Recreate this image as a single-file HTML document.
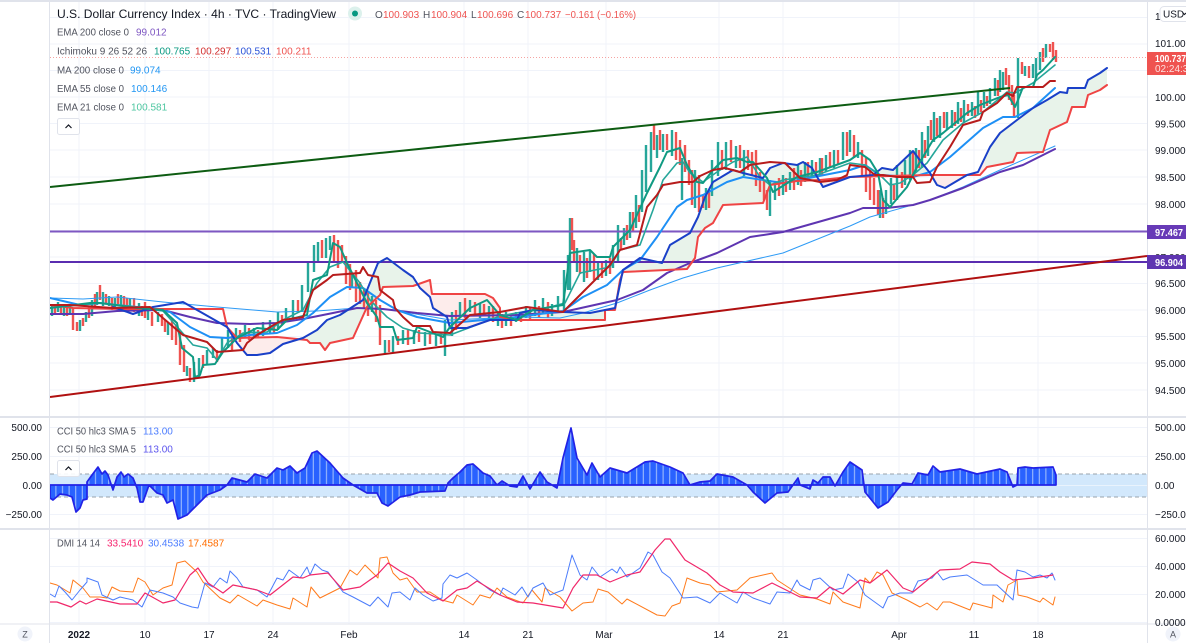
<!DOCTYPE html>
<html><head><meta charset="utf-8"><title>U.S. Dollar Currency Index</title>
<style>
html,body{margin:0;padding:0;background:#fff;width:1186px;height:643px;overflow:hidden}
svg{display:block;font-family:"Liberation Sans",sans-serif;filter:blur(.3px)}
.a{font-size:10px;fill:#131722}
.l{font-size:10px;fill:#50535e}
.v{font-size:10px}
.w{fill:none;stroke-linejoin:round;stroke-linecap:round}
</style></head><body>
<svg width="1186" height="643" viewBox="0 0 1186 643" xmlns="http://www.w3.org/2000/svg">
<defs>
<clipPath id="m"><rect x="50" y="2" width="1097" height="415"/></clipPath>
<clipPath id="cg"><rect x="307" y="0" width="108" height="417"/><rect x="517" y="0" width="300" height="417"/><rect x="880" y="0" width="50" height="417"/><rect x="985" y="0" width="125" height="417"/></clipPath>
<clipPath id="cr"><rect x="227" y="0" width="80" height="417"/><rect x="415" y="0" width="102" height="417"/><rect x="817" y="0" width="63" height="417"/><rect x="930" y="0" width="55" height="417"/></clipPath>
<pattern id="h" x="50" y="0" width="6.6" height="10" patternUnits="userSpaceOnUse"><rect width="6.6" height="10" fill="#2962ff"/><rect x="5.4" width="1" height="10" fill="#a9c4fb"/></pattern>
<path id="cl" d="M113 307L133 314 153 307 183 302 227 327 237 343 247 355 257 355 270 353 283 344 303 338 317 330 327 320 340 315 363 300 378 263 387 258 403 270 413 277 420 288 430 297 433 308 447 317 450 328 467 328 490 320 517 320 520 313 533 310 563 312 590 313 615 308 623 270 640 258 662 263 670 245 690 233 698 217 705 197 713 182 733 170 743 173 763 178 770 168 783 163 797 165 803 162 812 168 823 187 850 177 873 175 882 168 893 170 913 151 922 163 930 173 937 185 945 188 967 175 978 172 990 147 1000 133 1017 120 1033 108 1047 100 1060 92 1067 93 1068 88 1085 88 1088 80 1100 73 1107 68L1107 85 1100 90 1088 95 1085 107 1072 107 1067 122 1050 130 1043 152 1017 153 1013 162 987 167 980 175 930 175 850 177 820 180 797 181 770 185 763 203 723 205 713 223 705 228 698 237 695 258 687 269 623 272 620 280 615 310 605 310 605 320 547 320 516 320 500 317 500 308 493 298 485 294 450 294 432 294 430 280 413 286 383 287 380 295 367 307 353 338 330 343 325 350 320 343 310 343 307 340 277 337 237 338 227 327 223 309 123 309Z"/>
</defs>
<rect width="1186" height="643" fill="#fff"/>

<!-- grid -->
<path d="M79 2V624M145 2V624M209 2V624M273 2V624M349 2V624M464 2V624M528 2V624M606 2V624M719 2V624M783 2V624M899 2V624M974 2V624M1038 2V624" stroke="#f0f3fa" fill="none"/>
<path d="M50 17.5H1147M50 44H1147M50 70.500H1147M50 97H1147M50 123.500H1147M50 150H1147M50 177H1147M50 204H1147M50 230.500H1147M50 257H1147M50 283.500H1147M50 310H1147M50 336.500H1147M50 363H1147M50 390H1147M50 427.500H1147M50 456.500H1147M50 514.500H1147M50 538.500H1147M50 566.500H1147M50 594.500H1147M50 622.500H1147" stroke="#f0f3fa" fill="none"/>

<g clip-path="url(#m)">
<use href="#cl" clip-path="url(#cg)" fill="#e8f3ea"/>
<use href="#cl" clip-path="url(#cr)" fill="#fdeceb"/>
<!-- candles -->
<path d="M52 305V316M58 302V312M64 306V316M70 305V314M80 320V331M86 312V322M92 300V316M97 292V305M103 292V306M109 296V306M115 298V308M121 295V305M130 298V308M139 303V316M148 310V320M158 312V322M168 322V335M187 366V376M194 362V382M199 358V378M207 350V365M213 348V358M222 338V352M228 330V348M236 328V340M245 325V338M254 328V338M263 322V336M270 320V334M278 312V330M286 308V322M293 300V318M302 285V312M308 262V292M314 245V272M318 242V262M326 238V258M330 236V250M352 274V288M372 296V312M385 340V354M393 336V352M403 330V344M414 330V344M425 332V346M436 334V346M445 320V356M452 312V336M460 302V318M470 300V312M480 304V318M489 306V320M498 312V326M506 312V326M516 312V322M526 306V318M535 300V316M543 298V314M552 304V316M558 296V312M564 270V310M568 255V290M570 218V290M577 248V272M584 252V282M590 250V272M598 262V280M606 260V276M613 245V268M618 225V262M624 228V245M630 212V238M636 195V228M642 170V212M646 145V192M651 132V172M657 135V158M663 134V152M672 130V156M682 158V200M695 170V208M706 188V210M712 160V196M718 142V176M726 142V170M736 146V168M744 150V176M770 180V216M775 185V200M783 175V195M790 172V190M798 165V185M805 162V182M812 160V178M820 158V175M826 155V172M834 150V168M843 132V160M850 130V152M858 142V158M880 190V218M886 190V214M891 178V204M897 165V200M905 160V185M910 150V180M916 148V172M922 132V168M928 126V156M934 112V142M940 116V138M947 112V130M952 110V128M958 102V124M964 100V122M972 102V116M978 92V114M984 92V108M990 88V104M995 78V96M1000 70V92M1003 72V90M1018 58V118M1025 66V76M1033 64V78M1036 58V78M1040 52V70M1046 44V58" stroke="#26a69a" stroke-width="2.4" fill="none"/>
<path d="M55 304V314M61 305V315M67 304V316M73 308V330M77 322V331M83 318V326M89 306V318M95 294V306M100 285V300M106 294V304M112 298V310M118 294V304M124 296V308M127 298V312M134 298V312M142 306V316M145 302V318M152 312V326M162 314V326M165 320V332M172 318V340M176 325V345M180 332V365M184 345V372M190 368V382M203 355V368M217 350V362M232 336V350M240 330V342M249 328V340M258 330V338M274 325V334M282 315V325M298 300V312M322 240V258M334 235V262M338 240V268M342 245V262M346 256V284M350 264V290M356 270V302M360 282V304M364 288V308M368 292V316M376 300V322M380 305V345M389 340V352M398 336V345M408 330V345M419 330V342M430 332V344M441 332V344M456 310V330M465 298V318M475 302V316M484 304V316M493 306V322M502 314V328M511 314V326M521 312V322M530 308V320M539 306V318M548 302V318M572 218V250M574 240V262M580 255V274M587 258V278M594 254V280M602 262V278M610 258V274M621 238V250M627 225V240M633 212V232M639 205V222M654 125V150M660 130V150M667 134V150M676 132V160M680 140V165M685 145V172M689 160V185M692 170V205M699 175V212M703 195V208M709 190V208M722 150V170M731 140V162M740 145V168M748 150V170M752 152V176M756 150V186M760 172V192M764 180V200M767 190V210M779 178V196M786 178V192M794 168V190M801 170V186M808 162V178M816 162V175M822 158V176M830 152V168M838 150V165M847 132V156M854 135V158M862 150V175M866 158V192M870 170V200M874 178V205M878 190V215M883 198V218M894 185V200M902 172V188M913 152V176M919 150V168M925 140V158M931 120V140M937 118V136M944 112V128M955 112V126M961 108V122M968 104V116M975 106V118M981 100V112M987 96V106M998 80V96M1006 68V85M1009 75V100M1012 85V105M1014 95V118M1022 62V74M1029 66V78M1043 48V62M1050 44V52M1053 42V60M1056 50V62" stroke="#ef5350" stroke-width="2.4" fill="none"/>

<!-- horizontals -->
<path d="M50 57.500H1147" stroke="#f5a3a1" stroke-width="1" stroke-dasharray="1 2" fill="none"/>
<path d="M50 231.500H1147" stroke="#7e57c2" stroke-width="2" fill="none"/>
<path d="M50 262H1147" stroke="#5a2db0" stroke-width="2" fill="none"/>

<!-- MA 200 -->
<path class="w" stroke="#2e9bf5" stroke-width="1" d="M50 298L83 299 117 297 163 302 217 307 277 312 317 311 357 308 393 310 450 320 517 317 560 318 583 313 617 303 650 290 683 278 717 268 783 253 850 226 870 217 930 200 963 187 1000 170 1055 146"/>
<!-- EMA 200 -->
<path class="w" stroke="#5e35b1" stroke-width="2" d="M50 314L83 314 117 311 163 310 190 317 217 323 250 324 277 323 303 319 333 313 357 308 383 309 417 313 450 316 517 315 563 312 617 300 643 290 667 273 690 263 717 253 750 237 783 232 850 213 863 208 887 208 913 205 930 200 963 188 1000 172 1023 165 1055 149"/>
<!-- EMA 55 -->
<path class="w" stroke="#1e90f5" stroke-width="2" d="M50 298L80 305 100 303 117 305 147 308 170 312 190 327 210 337 227 338 250 335 277 333 297 325 313 313 330 297 347 287 363 288 380 300 397 310 417 317 450 323 517 317 563 311 583 297 607 285 623 270 640 260 657 237 677 207 687 200 703 195 727 182 743 177 783 183 850 170 865 165 880 175 913 177 930 172 950 157 983 128 1003 117 1015 117 1033 108 1055 88"/>
<!-- EMA 21 -->
<path class="w" stroke="#26a69a" stroke-width="1.6" d="M50 308L100 303 137 307 163 311 180 330 193 345 207 348 217 360 227 343 243 333 267 332 283 320 303 310 317 283 330 267 343 262 360 283 370 300 387 317 403 328 420 333 450 335 500 316 550 307 565 303 580 273 610 267 620 250 640 245 653 210 663 180 677 163 683 162 690 173 703 182 717 172 733 162 747 157 760 177 770 185 783 180 817 175 850 163 865 165 880 175 890 185 900 183 913 175 927 163 943 140 963 123 983 112 1007 92 1015 93 1033 83 1055 65"/>
<!-- Lead B -->
<path class="w" stroke="#ef4444" stroke-width="2" d="M50 305L73 308 123 309 223 309 227 327 237 338 277 337 307 340 310 343 320 343 325 350 330 343 353 338 367 307 380 295 383 287 413 286 430 280 432 294 450 294 485 294 493 298 500 308 500 317 516 320 547 320 605 320 605 310 615 310 620 280 623 272 687 269 695 258 698 237 705 228 713 223 723 205 763 203 770 185 797 181 820 180 850 177 930 175 980 175 987 167 1013 162 1017 153 1043 152 1050 130 1067 122 1072 107 1085 107 1088 95 1100 90 1107 85"/>
<!-- Lead A -->
<path class="w" stroke="#1a40c8" stroke-width="2" d="M113 307L133 314 153 307 183 302 227 327 237 343 247 355 257 355 270 353 283 344 303 338 317 330 327 320 340 315 363 300 378 263 387 258 403 270 413 277 420 288 430 297 433 308 447 317 450 328 467 328 490 320 517 320 520 313 533 310 563 312 590 313 615 308 623 270 640 258 662 263 670 245 690 233 698 217 705 197 713 182 733 170 743 173 763 178 770 168 783 163 797 165 803 162 812 168 823 187 850 177 873 175 882 168 893 170 913 151 922 163 930 173 937 185 945 188 967 175 978 172 990 147 1000 133 1017 120 1033 108 1047 100 1060 92 1067 93 1068 88 1085 88 1088 80 1100 73 1107 68"/>
<!-- Conversion -->
<path class="w" stroke="#0f9a82" stroke-width="2" d="M50 308L90 303 100 303 137 308 163 310 177 323 182 348 193 357 195 377 200 375 203 365 215 364 223 352 237 338 257 328 277 330 287 320 307 315 313 280 327 275 333 243 340 247 347 263 357 283 367 303 377 317 380 327 393 327 397 340 413 338 417 327 443 337 450 327 470 308 487 300 500 315 517 320 533 310 563 305 570 253 590 250 597 257 610 257 613 247 630 230 647 193 660 167 667 152 680 148 687 165 697 182 703 183 713 170 723 160 737 158 747 162 753 162 760 170 767 178 773 192 797 177 817 172 850 160 860 153 870 160 878 173 883 200 890 207 907 187 917 167 933 140 943 133 967 113 980 105 1000 97 1008 95 1015 107 1018 100 1023 87 1033 87 1037 75 1043 70 1055 57"/>
<!-- Base -->
<path class="w" stroke="#b71c1c" stroke-width="2" d="M50 305L70 305 113 308 150 307 177 330 183 335 207 342 217 352 243 350 247 343 257 335 277 323 283 320 303 317 313 290 327 280 333 275 360 273 363 267 368 275 378 277 380 290 393 300 395 308 403 317 413 326 430 326 433 332 450 333 470 315 500 312 527 307 563 312 610 265 620 250 637 245 647 207 657 195 663 185 680 182 693 182 700 176 713 170 725 168 740 172 750 165 770 162 785 163 800 178 820 182 837 180 847 175 850 165 865 167 875 175 883 175 897 177 913 177 917 183 930 182 937 167 950 147 963 125 980 120 983 112 997 103 1007 93 1013 96 1017 87 1043 87 1050 81 1055 81"/>
<!-- Trendlines -->
<path d="M50 187L1010 88" stroke="#0d5c12" stroke-width="2" fill="none"/>
<path d="M50 397L1147 256" stroke="#b01010" stroke-width="2" fill="none"/>
</g>

<!-- CCI -->
<rect x="50" y="474" width="1097" height="23" fill="#d2e8fc"/>
<path d="M50 485.500H1147" stroke="#e9f3fd" fill="none"/>
<path d="M50 474H1147M50 497H1147" stroke="#9aa3ad" stroke-dasharray="4 3" fill="none"/>
<path fill="url(#h)" stroke="#2222e6" stroke-width="1.700" stroke-linejoin="round" d="M50 485L50 498 53 500 60 494 67 495 72 497 76 512 80 508 83 500 87 499 87 482 92 475 98 467 102 474 105 471 108 475 113 490 117 477 121 472 124 477 128 474 133 478 137 488 140 502 143 502 149 485 157 493 163 495 167 503 173 500 178 519 187 515 197 505 207 495 220 490 227 485 232 478 247 482 255 474 267 478 277 468 283 470 290 466 297 473 305 468 312 453 317 451 330 463 343 478 353 485 367 493 377 493 382 503 388 506 400 497 410 495 420 492 445 491 448 483 453 478 460 472 467 465 473 464 483 473 490 476 497 485 502 481 510 486 517 487 523 476 530 489 540 472 547 482 557 488 563 458 571 428 577 458 587 475 592 463 600 477 610 468 627 473 645 462 653 461 670 467 683 473 690 485 700 482 710 481 717 474 733 477 747 485 753 492 765 503 777 493 788 492 798 478 800 485 810 489 813 480 818 483 823 477 830 477 835 486 843 472 850 462 862 470 865 492 878 508 888 502 897 490 903 483 912 484 918 473 928 475 933 466 940 472 960 469 977 474 1000 469 1007 472 1013 487 1017 485 1018 468 1025 467 1033 468 1053 467 1056 475 1056 485Z"/>

<!-- DMI -->
<path class="w" stroke="#ff7b1c" stroke-width="1" d="M50 583L57 585 70 593 73 580 83 588 90 597 100 597 107 598 112 587 120 591 133 592 138 578 145 582 153 595 163 588 172 585 177 563 185 561 197 572 203 582 220 598 230 603 238 595 257 606 263 600 277 605 290 609 293 598 307 607 311 587 320 598 330 593 340 588 350 570 357 575 365 565 378 578 380 558 387 557 393 573 400 580 407 578 417 592 430 592 442 600 453 603 457 595 473 605 480 595 490 598 497 588 507 597 523 603 532 590 542 602 545 588 560 597 572 611 583 603 593 602 598 589 608 592 622 604 627 599 657 615 665 616 672 606 680 603 687 578 700 583 710 585 717 592 737 590 750 578 763 575 772 573 777 580 800 595 817 599 830 604 833 592 843 602 860 608 865 578 870 583 877 572 883 575 892 593 907 600 920 607 927 603 937 610 943 602 950 602 970 610 973 603 992 608 993 595 1003 602 1008 585 1017 580 1018 595 1027 597 1040 602 1043 598 1053 605 1055 597"/>
<path class="w" stroke="#4c7dfb" stroke-width="1" d="M50 594L55 597 59 586 65 592 72 600 80 590 87 582 87 578 98 582 102 595 113 600 120 597 133 600 142 607 150 590 163 593 173 597 180 603 192 607 198 608 205 583 213 587 220 578 227 583 230 571 237 578 243 587 257 590 267 597 277 578 283 580 289 570 300 578 307 567 310 575 315 564 322 570 328 572 343 592 353 597 370 606 378 597 388 607 392 593 400 592 410 600 415 588 423 595 433 601 442 598 443 584 450 575 457 578 467 573 477 580 490 590 500 595 503 588 515 595 522 587 528 597 533 588 543 583 550 595 563 590 572 555 580 575 587 580 592 567 600 577 612 569 617 573 620 567 627 577 640 568 648 552 653 555 662 572 670 578 683 598 697 597 710 603 720 593 737 603 743 592 753 598 770 604 777 592 790 593 797 580 800 585 810 590 813 580 820 578 833 590 843 588 848 574 858 582 865 595 883 608 888 597 900 593 912 593 918 581 932 578 937 572 943 580 950 577 967 575 983 585 997 585 1013 600 1017 570 1025 572 1033 577 1040 575 1047 578 1052 573 1055 580"/>
<path class="w" stroke="#f0286a" stroke-width="1.200" d="M50 602L57 602 71 607 80 601 86 604 97 599 120 604 137 604 145 593 163 603 175 600 190 575 198 568 208 583 223 593 233 585 257 590 270 595 293 577 303 578 310 575 328 573 343 590 360 587 377 575 388 563 400 571 413 578 427 593 443 601 457 590 467 588 477 581 500 595 517 602 533 603 563 608 573 588 583 575 597 575 610 582 627 575 640 572 655 550 665 539 670 539 685 560 707 573 720 585 733 592 753 593 772 583 800 597 817 598 830 587 843 594 860 580 870 583 887 570 903 588 913 592 930 578 940 570 960 569 972 562 990 564 1000 572 1013 580 1033 578 1053 575"/>

<!-- frame -->
<path d="M0 1H1186" stroke="#e0e3eb" stroke-width="2" fill="none"/>
<path d="M0 417H1186M0 529H1186" stroke="#e0e3eb" stroke-width="2" fill="none"/>
<path d="M0 624H1186" stroke="#e0e3eb" fill="none"/>
<path d="M49.500 0V643M1147.500 0V643" stroke="#e0e3eb" fill="none"/>

<!-- right axis -->
<g class="a">
<text x="1155" y="20" class="a">101.500</text>
<text x="1155" y="47" class="a">101.000</text>
<text x="1155" y="101" class="a">100.000</text>
<text x="1155" y="127.500" class="a">99.500</text>
<text x="1155" y="154" class="a">99.000</text>
<text x="1155" y="181" class="a">98.500</text>
<text x="1155" y="208" class="a">98.000</text>
<text x="1155" y="261" class="a">97.000</text>
<text x="1155" y="287" class="a">96.500</text>
<text x="1155" y="314" class="a">96.000</text>
<text x="1155" y="340" class="a">95.500</text>
<text x="1155" y="367" class="a">95.000</text>
<text x="1155" y="394" class="a">94.500</text>
<text x="1155" y="431" class="a">500.00</text>
<text x="1155" y="460" class="a">250.00</text>
<text x="1155" y="489" class="a">0.00</text>
<text x="1155" y="518" class="a">−250.00</text>
<text x="1155" y="542" class="a">60.0000</text>
<text x="1155" y="570" class="a">40.0000</text>
<text x="1155" y="598" class="a">20.0000</text>
<text x="1155" y="626" class="a">0.0000</text>
<text x="42" y="431" text-anchor="end" class="a">500.00</text>
<text x="42" y="460" text-anchor="end" class="a">250.00</text>
<text x="42" y="489" text-anchor="end" class="a">0.00</text>
<text x="42" y="518" text-anchor="end" class="a">−250.00</text>
</g>
<rect x="1147" y="52" width="39" height="23" fill="#ef5350"/>
<text x="1155" y="62" style="font-size:10px;font-weight:bold" fill="#fff" textLength="31" lengthAdjust="spacingAndGlyphs">100.737</text>
<text x="1155" y="72" style="font-size:10px" fill="#fde0df">02:24:38</text>
<rect x="1147" y="225" width="39" height="14" fill="#673ab7"/>
<text x="1155" y="236" style="font-size:10px;font-weight:bold" fill="#fff" textLength="28" lengthAdjust="spacingAndGlyphs">97.467</text>
<rect x="1147" y="255" width="39" height="14" fill="#5e35b1"/>
<text x="1155" y="266" style="font-size:10px;font-weight:bold" fill="#fff" textLength="28" lengthAdjust="spacingAndGlyphs">96.904</text>
<rect x="1160" y="6.500" width="36" height="15" rx="4" fill="#fff" stroke="#e0e3eb"/>
<text x="1163" y="17.500" style="font-size:10px" fill="#131722">USD</text>
<path d="M1182.500 12.500L1184.500 14.500 1186 13" stroke="#131722" fill="none"/>

<!-- time axis -->
<g style="font-size:10px" fill="#131722" text-anchor="middle">
<text x="79" y="638" font-weight="bold">2022</text>
<text x="145" y="638">10</text><text x="209" y="638">17</text><text x="273" y="638">24</text>
<text x="349" y="638">Feb</text><text x="464" y="638">14</text><text x="528" y="638">21</text>
<text x="604" y="638">Mar</text><text x="719" y="638">14</text><text x="783" y="638">21</text>
<text x="899" y="638">Apr</text><text x="974" y="638">11</text><text x="1038" y="638">18</text>
</g>
<circle cx="25" cy="634" r="7.500" fill="#f0f3fa"/><text x="25" y="637.500" text-anchor="middle" style="font-size:9px" fill="#50535e">Z</text>
<circle cx="1173" cy="634" r="7.500" fill="#f0f3fa"/><text x="1173" y="637.500" text-anchor="middle" style="font-size:9px" fill="#50535e">A</text>

<!-- legend -->
<text x="57" y="18" style="font-size:12px" fill="#131722" textLength="279" lengthAdjust="spacingAndGlyphs">U.S. Dollar Currency Index · 4h · TVC · TradingView</text>
<circle cx="355" cy="13.500" r="7" fill="#dcf1ec"/><circle cx="355" cy="13.500" r="3" fill="#089981"/>
<g class="v" fill="#ef5350">
<text x="375" y="18" fill="#50535e">O</text><text x="383" y="18">100.903</text>
<text x="423" y="18" fill="#50535e">H</text><text x="431" y="18">100.904</text>
<text x="471" y="18" fill="#50535e">L</text><text x="477" y="18">100.696</text>
<text x="517" y="18" fill="#50535e">C</text><text x="525" y="18">100.737</text>
<text x="565" y="18" textLength="71" lengthAdjust="spacingAndGlyphs">−0.161 (−0.16%)</text>
</g>
<text class="l" x="57" y="35.500" textLength="72" lengthAdjust="spacingAndGlyphs">EMA 200 close 0</text><text class="v" x="136" y="35.500" fill="#7e57c2">99.012</text>
<text class="l" x="57" y="54.500" textLength="90" lengthAdjust="spacingAndGlyphs">Ichimoku 9 26 52 26</text>
<text class="v" x="154" y="54.500" fill="#089981">100.765</text><text class="v" x="195" y="54.500" fill="#d32f2f">100.297</text><text class="v" x="235" y="54.500" fill="#2a52d8">100.531</text><text class="v" x="276" y="54.500" fill="#ef5350">100.211</text>
<text class="l" x="57" y="73.500" textLength="67" lengthAdjust="spacingAndGlyphs">MA 200 close 0</text><text class="v" x="130" y="73.500" fill="#2196f3">99.074</text>
<text class="l" x="57" y="92" textLength="67" lengthAdjust="spacingAndGlyphs">EMA 55 close 0</text><text class="v" x="131" y="92" fill="#2196f3">100.146</text>
<text class="l" x="57" y="110.500" textLength="67" lengthAdjust="spacingAndGlyphs">EMA 21 close 0</text><text class="v" x="131" y="110.500" fill="#4dc6a0">100.581</text>
<rect x="57.500" y="118.500" width="22" height="16" rx="2" fill="#fff" stroke="#e0e3eb"/>
<path d="M65.500 128L68.500 125 71.500 128" stroke="#131722" stroke-width="1.200" fill="none"/>

<text class="l" x="57" y="434.500" textLength="79" lengthAdjust="spacingAndGlyphs">CCI 50 hlc3 SMA 5</text><text class="v" x="143" y="434.500" fill="#4c7dff">113.00</text>
<text class="l" x="57" y="452.500" textLength="79" lengthAdjust="spacingAndGlyphs">CCI 50 hlc3 SMA 5</text><text class="v" x="143" y="452.500" fill="#5c55ee">113.00</text>
<rect x="57.500" y="460.500" width="22" height="16" rx="2" fill="#fff" fill-opacity=".9" stroke="#e0e3eb"/>
<path d="M65.500 470L68.500 467 71.500 470" stroke="#131722" stroke-width="1.200" fill="none"/>
<text class="l" x="57" y="546.500" textLength="43" lengthAdjust="spacingAndGlyphs">DMI 14 14</text>
<text class="v" x="107" y="546.500" fill="#f7256f">33.5410</text><text class="v" x="148" y="546.500" fill="#4c7dff">30.4538</text><text class="v" x="188" y="546.500" fill="#ff6d00">17.4587</text>
</svg>
</body></html>
